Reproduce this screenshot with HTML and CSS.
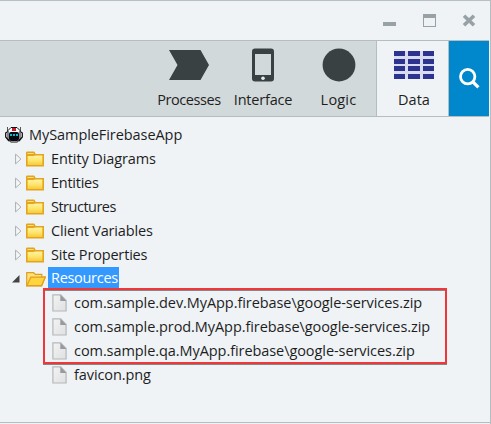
FILE: index.html
```html
<!DOCTYPE html>
<html lang="en">
<head>
<meta charset="utf-8">
<title>MySampleFirebaseApp</title>
<link rel="stylesheet" href="styles.css">
</head>
<body>
<svg class="defs" width="0" height="0">
  <defs>
    <linearGradient id="gold" x1="0" y1="0" x2="0" y2="1"><stop offset="0" stop-color="#fff2a4"/><stop offset=".5" stop-color="#ffe66c"/><stop offset="1" stop-color="#f6ca42"/></linearGradient>
    <linearGradient id="paper" x1="0" y1="0" x2="1" y2="1"><stop offset="0" stop-color="#f3f3f3"/><stop offset="1" stop-color="#dfe0e1"/></linearGradient>
  </defs>
  <symbol id="folder" viewBox="0 0 18 16"><path d="M0 15.5V1.2L.8.5H8.2L9.8 3H18V15.5Z" fill="#e3a51b"/><path d="M1.5 3V2H7L8 3Z" fill="#ffdf80"/><path d="M1.6 5H7.7L9.2 4.5H16.4V14.1H1.6Z" fill="url(#gold)"/></symbol>
  <symbol id="folder-open" viewBox="0 0 20 16"><path d="M.7 14.8V1.7H7.6L9.4 3.4H15.8V6H19.3L15.7 14.8Z" fill="#ffe079" stroke="#dfa01d" stroke-width="1.2"/><path d="M.8 14.7L4.8 6.2H19.2L15.5 14.7Z" fill="#ffd43e" stroke="#dfa01d" stroke-width="1.2"/></symbol>
  <symbol id="file" viewBox="0 0 15 18"><path d="M.9.8H8.7L14.1 6.4V17H.9Z" fill="url(#paper)" stroke="#b6b8ba" stroke-width="1.2"/><path d="M8.3.8V6.9H14.4Z" fill="#96999d"/></symbol>
  <symbol id="closed" viewBox="0 0 7 12"><path d="M.6 1.1V10.9L5.9 6Z" fill="#f5f7f8" stroke="#aaadb0"/></symbol>
</svg>
<div class="window">
  <header class="titlebar">
    <svg width="100" height="16" viewBox="0 0 100 16" fill="#98a2a6"><path d="M3 9H16V13H3Z"/><path fill-rule="evenodd" d="M43 1H56V14H43ZM44 5V13H55V5Z"/><path d="M84 2.7L94 12.3M94 2.7L84 12.3" stroke="#98a2a6" stroke-width="3.6"/></svg>
  </header>
  <nav class="toolbar">
    <div class="tab processes"><svg width="40" height="34" viewBox="0 0 40 34"><path d="M0 2H31.5L40 17L31.5 32H0L8.5 17Z" fill="#394143"/></svg><span>Processes</span></div>
    <div class="tab interface"><svg width="22" height="34" viewBox="0 0 22 34"><rect y=".5" width="22" height="33" rx="3" fill="#394143"/><path d="M3 6H19V27H3Z" fill="#d2d9db"/><circle cx="11" cy="30.2" r="1.8" fill="#e8eced"/></svg><span>Interface</span></div>
    <div class="tab logic"><svg width="34" height="34" viewBox="0 0 34 34"><circle cx="17" cy="17" r="16.4" fill="#394143"/></svg><span>Logic</span></div>
    <div class="tab data"><svg width="40" height="34" viewBox="0 0 40 34"><path d="M0 3H40V31H0Z" fill="#d9dcef"/><path d="M0 3H11V8H0ZM14 3H26V8H14ZM29 3H40V8H29ZM0 11H11V16H0ZM14 11H26V16H14ZM29 11H40V16H29ZM0 18H11V23H0ZM14 18H26V23H14ZM29 18H40V23H29ZM0 26H11V31H0ZM14 26H26V31H14ZM29 26H40V31H29Z" fill="#2d348f"/></svg><span>Data</span></div>
    <div class="search"><svg width="21" height="21" viewBox="0 0 21 21"><circle cx="8.7" cy="8.6" r="7.2" fill="none" stroke="#fff" stroke-width="2.8"/><path d="M13.5 13.5L19.4 19.4" stroke="#fff" stroke-width="3.2"/></svg></div>
  </nav>
  <main class="tree">
    <div class="row root"><svg width="18" height="18" viewBox="0 0 18 18"><path d="M2.5 6V1M15.5 6V1" stroke="#555" fill="none"/><path d="M2 6L.7 7V11L4 15M16 6L17.3 7V11L14 15" stroke="#111" fill="#fff" stroke-width="1.3"/><path d="M6 1.5H12L15 4.5V13L12.5 16H5.5L3 13V4.5Z" fill="#fff" stroke="#111"/><path d="M7 2H11V5H7Z" fill="#c5202b"/><rect x="4" y="6" width="10" height="9" rx="2" fill="#050b0e"/><path d="M5 8H7V10H5ZM8 8H10V10H8ZM11 8H13V10H11Z" fill="#13b8d4"/></svg><span class="label t-root">MySampleFirebaseApp</span></div>
    <div class="row folder"><svg class="arrow"><use href="#closed"/></svg><svg class="icon"><use href="#folder"/></svg><span class="label t-diagrams">Entity Diagrams</span></div>
    <div class="row folder"><svg class="arrow"><use href="#closed"/></svg><svg class="icon"><use href="#folder"/></svg><span class="label t-entities">Entities</span></div>
    <div class="row folder"><svg class="arrow"><use href="#closed"/></svg><svg class="icon"><use href="#folder"/></svg><span class="label t-structures">Structures</span></div>
    <div class="row folder"><svg class="arrow"><use href="#closed"/></svg><svg class="icon"><use href="#folder"/></svg><span class="label t-client">Client Variables</span></div>
    <div class="row folder"><svg class="arrow"><use href="#closed"/></svg><svg class="icon"><use href="#folder"/></svg><span class="label t-site">Site Properties</span></div>
    <div class="row folder open"><svg class="arrow" viewBox="0 0 8 8"><path d="M7.5 0V7.5H0Z" fill="#444"/></svg><svg class="icon"><use href="#folder-open"/></svg><span class="selected"><span class="label t-resources">Resources</span></span></div>
    <div class="files">
      <div class="row file"><svg class="page"><use href="#file"/></svg><span class="label t-dev">com.sample.dev.MyApp.firebase\google-services.zip</span></div>
      <div class="row file"><svg class="page"><use href="#file"/></svg><span class="label t-prod">com.sample.prod.MyApp.firebase\google-services.zip</span></div>
      <div class="row file"><svg class="page"><use href="#file"/></svg><span class="label t-qa">com.sample.qa.MyApp.firebase\google-services.zip</span></div>
      <div class="highlight"></div>
    </div>
    <div class="row file"><svg class="page"><use href="#file"/></svg><span class="label t-fav">favicon.png</span></div>
  </main>
</div>
</body>
</html>
```
FILE: styles.css
```css
* { box-sizing: border-box; }
body { margin: 0; background: #eff3f6; color: #1e1e1e; font: 14.5px/24px "Open Sans", "Noto Sans", sans-serif; }
.defs { position: absolute; }
.window { width: 491px; height: 424px; display: flex; flex-direction: column; border-top: 1px solid #b7c0c2; border-right: 1px solid #b4bdc0; }
.titlebar { height: 39px; padding: 12px 10px 0 0; display: flex; justify-content: flex-end; }
.toolbar { height: 77px; display: flex; background: #d2d9db; border-top: 1px solid #b4bebf; border-bottom: 1px solid #b4bebf; padding-left: 151px; margin-right: 1px; }
.tab { display: flex; flex-direction: column; align-items: center; padding-top: 7px; white-space: nowrap; }
.tab span { line-height: 22px; margin-top: 7px; }
.processes { width: 76px; letter-spacing: -.45px; }
.interface { width: 72px; letter-spacing: -.2px; }
.logic { width: 77px; padding-left: 2px; letter-spacing: .2px; }
.data { width: 73px; height: 75px; padding-left: 3px; background: #eff3f6; border-left: 1px solid #b4bebf; border-right: 1px solid #b4bebf; letter-spacing: 0; }
.search { width: 40px; display: flex; align-items: center; justify-content: center; background: #0087cc; }
.tree { height: 306px; padding-top: 6px; border-bottom: 1px solid #b4bebf; }
.row { height: 24px; display: flex; align-items: center; white-space: nowrap; }
.root { padding-left: 5px; }
.root .label { margin-left: 6px; }
.folder { padding-left: 15px; }
.arrow { width: 7px; height: 12px; margin-right: 4px; }
.icon { width: 18px; height: 16px; margin-right: 7px; }
.open { padding-left: 12px; }
.open .arrow { width: 8px; height: 8px; margin-right: 6px; }
.open .icon { width: 20px; margin-right: 2px; }
.selected { width: 71px; height: 21px; margin-bottom: 3px; line-height: 22px; padding-left: 3px; background: #3399ff; color: #fff; }
.files { position: relative; }
.file { padding-left: 52px; }
.page { width: 15px; height: 18px; margin-right: 7px; }
.label { letter-spacing: -.3px; }
.t-root { letter-spacing: -.07px; }
.t-diagrams { letter-spacing: -.1px; }
.t-entities { letter-spacing: -.25px; }
.t-structures { letter-spacing: -.5px; }
.t-client, .t-site { letter-spacing: -.17px; }
.t-dev, .t-prod, .t-qa { letter-spacing: -.07px; }
.t-fav { letter-spacing: -.1px; }
.highlight { position: absolute; left: 43px; top: -3px; width: 404px; height: 76px; border: 2px solid #ef373a; box-shadow: 0 1px #858688, inset 0 1px #858688; }
```
